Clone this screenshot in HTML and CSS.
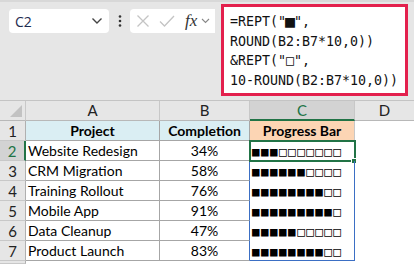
FILE: index.html
```html
<!DOCTYPE html>
<html lang="en">
<head>
  <meta charset="UTF-8" />
  <title>Progress Bar - REPT</title>
  <link rel="stylesheet" href="styles.css">
</head>
<body>
  <div class="toolbar">
    <div class="namebox">
      <span>C2</span>
      <svg width="12" height="8" viewBox="0 0 12 8"><path d="M1.5 1.5 L6 6 L10.5 1.5" fill="none" stroke="#444" stroke-width="1.4"/></svg>
    </div>
    <svg class="grip" width="4" height="14" viewBox="0 0 4 14">
      <circle cx="2" cy="2.5" r="1.3" fill="#333"/>
      <circle cx="2" cy="7" r="1.3" fill="#333"/>
      <circle cx="2" cy="11.5" r="1.3" fill="#333"/>
    </svg>
    <div class="fxbox">
      <svg width="14" height="14" viewBox="0 0 14 14"><path d="M1.5 1.5 L12.5 12.5 M12.5 1.5 L1.5 12.5" stroke="#c4c4c4" stroke-width="1.3"/></svg>
      <svg width="16" height="14" viewBox="0 0 16 14"><path d="M1 7.5 L5.5 12 L15 2" fill="none" stroke="#c4c4c4" stroke-width="1.3"/></svg>
      <span class="fx">fx</span>
      <svg width="9" height="6" viewBox="0 0 9 6"><path d="M1 1 L4.5 4.5 L8 1" fill="none" stroke="#888" stroke-width="1.1"/></svg>
    </div>
    <div class="formula">=REPT("<span class="sq">■</span>",<br>ROUND(B2:B7*10,0))<br>&amp;REPT("□",<br>10-ROUND(B2:B7*10,0))</div>
  </div>

  <div class="sheet">
    <div class="hd corner"><span class="tri"></span></div>
    <div class="hd">A</div>
    <div class="hd">B</div>
    <div class="hd col-sel">C</div>
    <div class="hd last">D</div>

    <div class="rh">1</div>
    <div class="cell title blue">Project</div>
    <div class="cell title blue">Completion</div>
    <div class="cell title peach">Progress Bar</div>
    <div class="cell empty"></div>

    <div class="rh row-sel">2</div>
    <div class="cell">Website Redesign</div>
    <div class="cell pct edge">34%</div>
    <div class="cell bar active">■■■□□□□□□□</div>
    <div class="cell empty"></div>

    <div class="rh">3</div>
    <div class="cell">CRM Migration</div>
    <div class="cell pct edge">58%</div>
    <div class="cell bar">■■■■■■□□□□</div>
    <div class="cell empty"></div>

    <div class="rh">4</div>
    <div class="cell">Training Rollout</div>
    <div class="cell pct edge">76%</div>
    <div class="cell bar">■■■■■■■■□□</div>
    <div class="cell empty"></div>

    <div class="rh">5</div>
    <div class="cell">Mobile App</div>
    <div class="cell pct edge">91%</div>
    <div class="cell bar">■■■■■■■■■□</div>
    <div class="cell empty"></div>

    <div class="rh">6</div>
    <div class="cell">Data Cleanup</div>
    <div class="cell pct edge">47%</div>
    <div class="cell bar">■■■■■□□□□□</div>
    <div class="cell empty"></div>

    <div class="rh">7</div>
    <div class="cell">Product Launch</div>
    <div class="cell pct edge">83%</div>
    <div class="cell bar bottom">■■■■■■■■□□</div>
    <div class="cell empty"></div>

    <div class="rh"></div>
    <div class="cell empty"></div>
    <div class="cell empty"></div>
    <div class="cell empty"></div>
    <div class="cell empty"></div>
  </div>
</body>
</html>
```

FILE: styles.css
```css
body {
  margin: 0;
  width: 414px;
  height: 264px;
  overflow: hidden;
  background: white;
  font-family: Lato, "Liberation Sans", sans-serif;
}

.toolbar {
  display: flex;
  align-items: flex-start;
  height: 100px;
  box-sizing: border-box;
  padding: 4px 0 0 9px;
  background: #e6e6e6;
  border-top: 2px solid #d8d8d8;
}

.namebox {
  display: flex;
  align-items: center;
  justify-content: space-between;
  width: 100px;
  height: 24px;
  box-sizing: border-box;
  margin-top: 3px;
  padding: 0 6px 0 6px;
  background: white;
  border-radius: 4px;
  font-family: "Open Sans", sans-serif;
  font-size: 14px;
  color: #1d2b4f;
}

.grip {
  margin: 8px 8px 0 9px;
}

.fxbox {
  display: flex;
  align-items: center;
  gap: 9px;
  width: 85px;
  height: 24px;
  box-sizing: border-box;
  margin-top: 3px;
  padding-left: 6px;
  background: white;
  border-radius: 4px 0 0 4px;
}

.fx {
  font-family: "Liberation Serif", serif;
  font-style: italic;
  font-size: 17px;
  color: #333;
  margin-left: 1px;
  margin-right: -5px;
}

.formula {
  width: 187px;
  height: 92px;
  box-sizing: border-box;
  margin-left: 6px;
  margin-top: -2px;
  padding: 5px 0 0 6px;
  background: white;
  border: 3px solid #e3204d;
  font-family: "DejaVu Sans Mono", monospace;
  font-size: 13.3px;
  line-height: 19.5px;
  color: #111;
}

.formula .sq {
  display: inline-block;
  transform: scale(1.25);
}

.sheet {
  display: grid;
  grid-template-columns: 26px 134px 90px 105px 1fr;
  grid-template-rows: repeat(8, 20px) 3px;
  border-top: 1px solid #c4c4c4;
  font-size: 14px;
  color: #000;
}

.hd {
  background: #e6e6e6;
  border-right: 1px solid #c8c8c8;
  border-bottom: 1px solid #b8b8b8;
  text-align: center;
  line-height: 19px;
  font-size: 15px;
  color: #222;
}

.hd.last {
  border-right: none;
}

.corner {
  position: relative;
}

.tri {
  position: absolute;
  right: 3px;
  bottom: 3px;
  width: 0;
  height: 0;
  border-left: 12px solid transparent;
  border-bottom: 12px solid #c2c2c2;
}

.col-sel {
  background: #d3d3d3;
  color: #217346;
  border-bottom: 2px solid #217346;
  line-height: 18px;
}

.rh {
  background: #e6e6e6;
  border-right: 1px solid #b0b0b0;
  border-bottom: 1px solid #c8c8c8;
  text-align: center;
  line-height: 20px;
  font-size: 15px;
  color: #222;
}

.row-sel {
  background: #d3d3d3;
  color: #217346;
  border-right: 2px solid #217346;
}

.cell {
  padding-left: 2px;
  line-height: 20px;
  border-right: 1px solid #a6a6a6;
  border-bottom: 1px solid #a6a6a6;
  white-space: nowrap;
  overflow: hidden;
}

.title {
  font-weight: bold;
  text-align: center;
  padding-left: 0;
}

.blue {
  background: #daeef3;
}

.peach {
  background: #fcd5b4;
  border-right-color: #c8c8c8;
}

.pct {
  text-align: center;
  padding-left: 0;
}

.edge {
  border-right-color: #3b6fc4;
}

.bar {
  position: relative;
  overflow: visible;
  padding-left: 2px;
  border-bottom: none;
  border-right-color: #3b6fc4;
  font-family: "DejaVu Sans Mono", monospace;
  font-size: 12.5px;
  letter-spacing: 1.5px;
  line-height: 22px;
}

.bar.bottom {
  border-bottom: 1px solid #3b6fc4;
}

.active {
  outline: 2px solid #217346;
  outline-offset: -1px;
}

.active::after {
  content: "";
  position: absolute;
  right: -3px;
  bottom: -3px;
  width: 4px;
  height: 4px;
  background: #217346;
  border: 1px solid white;
}

.empty {
  border: none;
}
```
